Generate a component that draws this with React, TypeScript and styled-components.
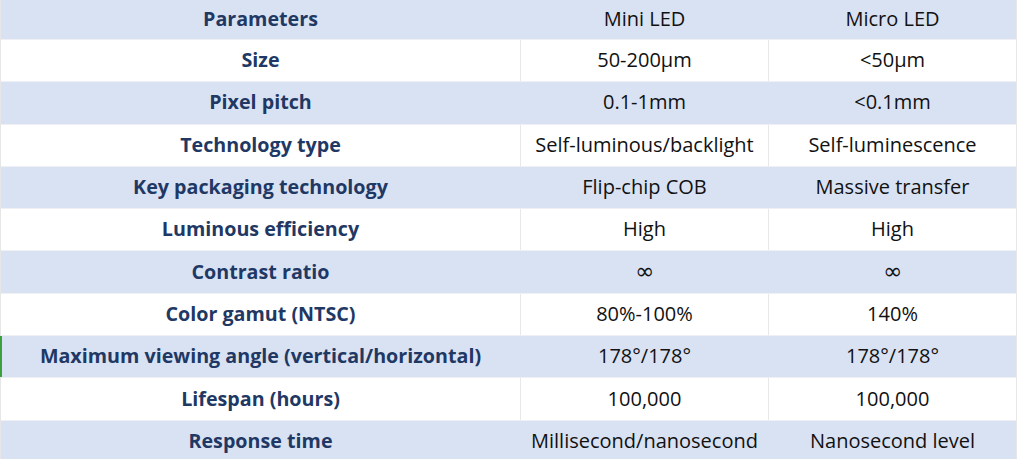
import { FC } from "react";
import styled, { createGlobalStyle } from "styled-components";

interface Row {
  param: string;
  mini: string;
  micro: string;
}

const rows: Row[] = [
  { param: "Size", mini: "50-200μm", micro: "<50μm" },
  { param: "Pixel pitch", mini: "0.1-1mm", micro: "<0.1mm" },
  { param: "Technology type", mini: "Self-luminous/backlight", micro: "Self-luminescence" },
  { param: "Key packaging technology", mini: "Flip-chip COB", micro: "Massive transfer" },
  { param: "Luminous efficiency", mini: "High", micro: "High" },
  { param: "Contrast ratio", mini: "∞", micro: "∞" },
  { param: "Color gamut (NTSC)", mini: "80%-100%", micro: "140%" },
  { param: "Maximum viewing angle (vertical/horizontal)", mini: "178°/178°", micro: "178°/178°" },
  { param: "Lifespan (hours)", mini: "100,000", micro: "100,000" },
  { param: "Response time", mini: "Millisecond/nanosecond", micro: "Nanosecond level" },
];

const renderValue = (value: string) =>
  value === "∞" ? <Infinity>∞</Infinity> : value;

const App: FC = () => {
  return (
    <>
      <GlobalStyle />
      <Page>
        <Table>
          <HeaderRow $shaded>
            <ParamCell>Parameters</ParamCell>
            <ValueCell>Mini LED</ValueCell>
            <ValueCell>Micro LED</ValueCell>
          </HeaderRow>
          {rows.map((row, i) => (
            <BodyRow key={row.param} $shaded={i % 2 === 1}>
              {i === 7 && <Marker />}
              <ParamCell>{row.param}</ParamCell>
              <ValueCell>{renderValue(row.mini)}</ValueCell>
              <ValueCell>{renderValue(row.micro)}</ValueCell>
            </BodyRow>
          ))}
        </Table>
      </Page>
    </>
  );
};

export default App;

const GlobalStyle = createGlobalStyle`
  html, body {
    margin: 0;
    padding: 0;
    background: #fff;
  }
  body {
    font-family: "Open Sans", "Noto Sans", "Liberation Sans", sans-serif;
  }
`;

const Page = styled.div`
  width: 1024px;
  height: 459px;
  overflow: hidden;
  background: #fff;
`;

const Table = styled.div`
  width: 1015px;
  border-left: 1px solid #e6e6e6;
  border-right: 1px solid #e6e6e6;
  display: flex;
  flex-direction: column;
  gap: 1px;
  background: #eef0f4;
`;

const BodyRow = styled.div<{ $shaded?: boolean }>`
  position: relative;
  display: grid;
  grid-template-columns: 519px 248px 1fr;
  height: 41.3px;
  flex-shrink: 0;
  background: ${({ $shaded }) => ($shaded ? "#d9e2f3" : "#fff")};

  & > div + div {
    border-left: 1px solid ${({ $shaded }) => ($shaded ? "#d9e2f3" : "#e8e8e8")};
  }
`;

const HeaderRow = styled(BodyRow)`
  height: 39px;
`;

const Cell = styled.div`
  display: flex;
  align-items: center;
  justify-content: center;
  padding-bottom: 2px;
  white-space: nowrap;
`;

const ParamCell = styled(Cell)`
  font-size: 19.7px;
  font-weight: 700;
  color: #1f3864;
`;

const ValueCell = styled(Cell)`
  font-size: 20px;
  color: #111;
`;

const Infinity = styled.span`
  font-family: "DejaVu Sans", sans-serif;
  font-size: 23px;
  line-height: 1;
`;

const Marker = styled.span`
  position: absolute;
  left: -1px;
  top: 0;
  width: 2px;
  height: 41px;
  background: #3ca03c;
`;
